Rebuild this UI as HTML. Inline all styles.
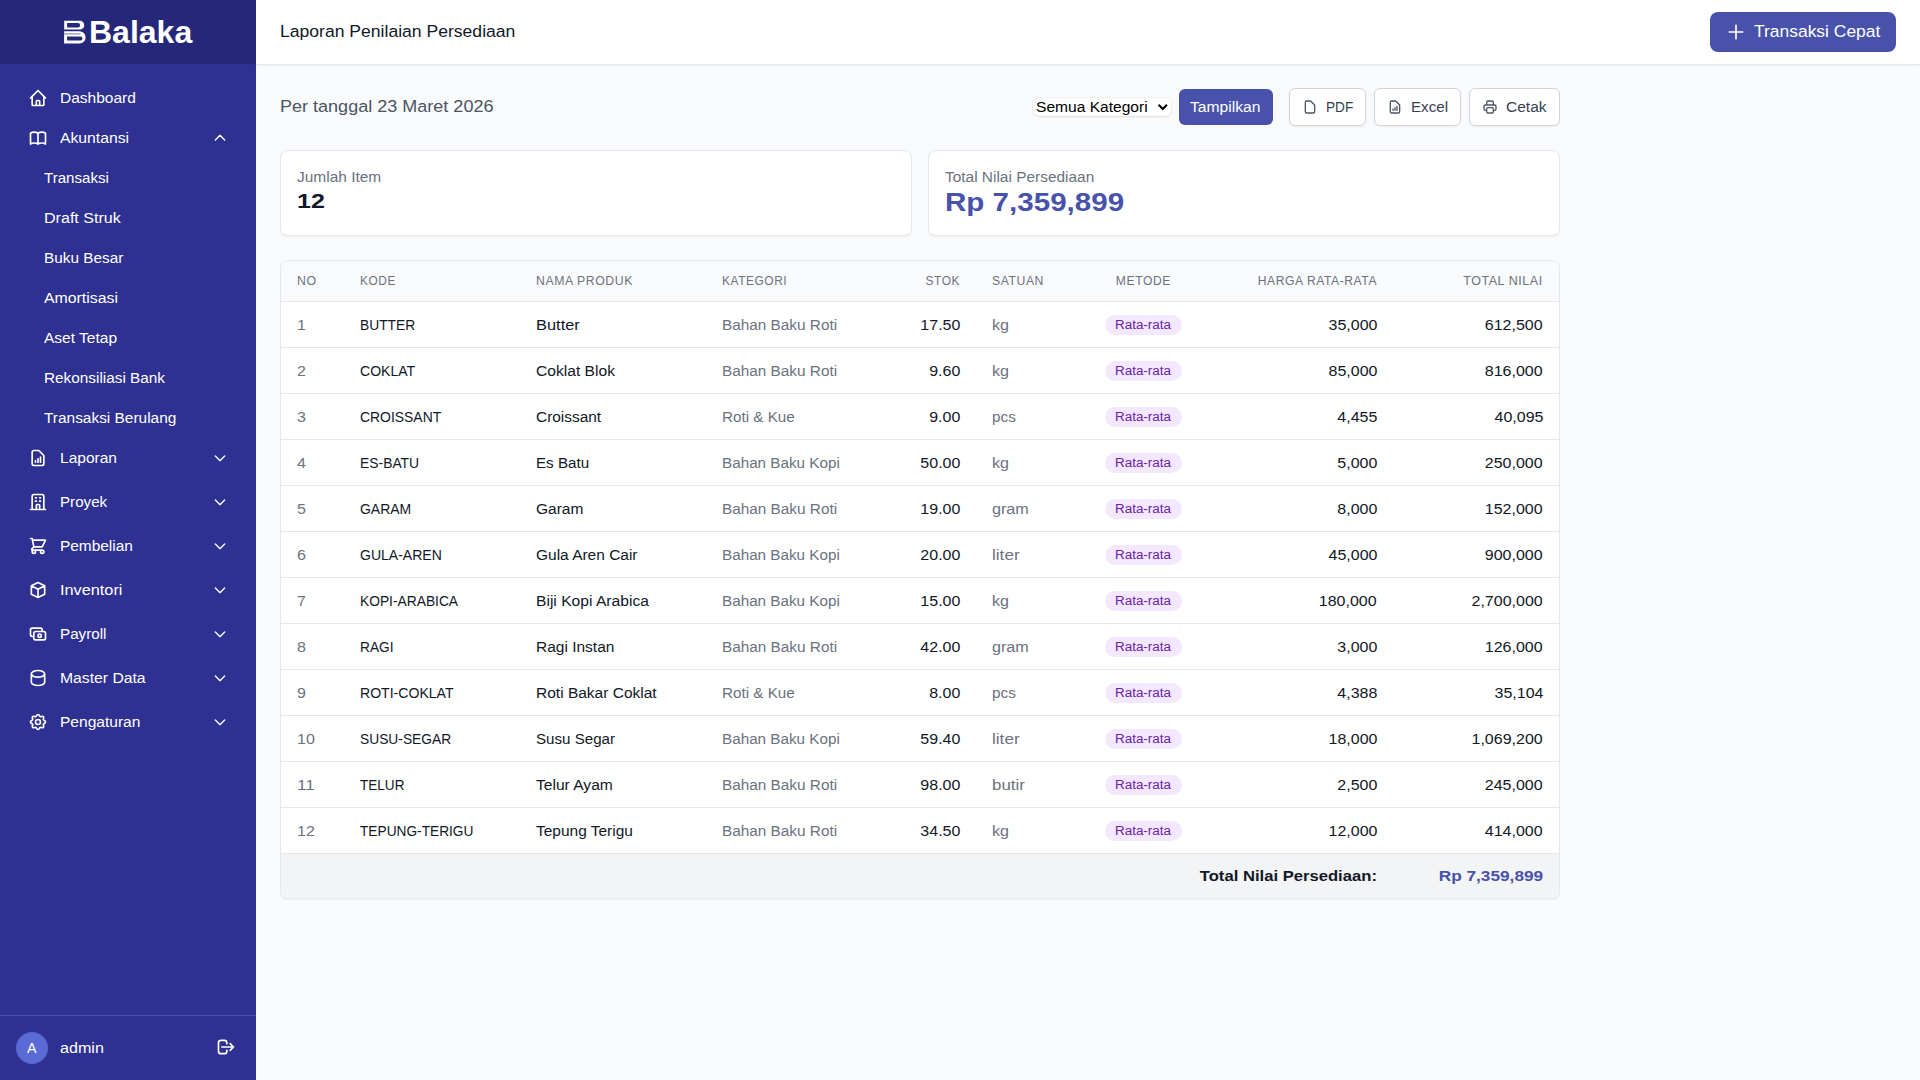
<!DOCTYPE html><html lang="id"><head><meta charset="utf-8"><title>Laporan Penilaian Persediaan</title><style>
*{box-sizing:border-box;margin:0;padding:0}
html,body{width:1920px;height:1080px;overflow:hidden}
body{font-family:"Liberation Sans",sans-serif;background:#F9FAFB;color:#111827;position:relative}
.abs{position:absolute}
.sb{position:absolute;left:0;top:0;width:256px;height:1080px;background:#2E3192;color:#fff}
.logo{position:absolute;left:0;top:0;width:256px;height:64px;background:#25287A}
.nav{position:absolute;left:28px;height:20px;line-height:20px;white-space:nowrap;display:flex;align-items:center}
.nav svg{flex:none}
.nav .lbl{position:absolute;left:32px;top:0;line-height:20px}
.sub{position:absolute;left:44px;height:20px;line-height:20px;white-space:nowrap}
.chev{position:absolute;left:212px}
.hdr{position:absolute;left:256px;top:0;width:1664px;height:65px;background:#fff;border-bottom:1px solid #E5E7EB;box-shadow:0 1px 2px rgba(0,0,0,.05)}
.btn{position:absolute;height:38px;top:88px;background:#fff;border:1px solid #D1D5DB;border-radius:6px;box-shadow:0 1px 2px rgba(0,0,0,.05);color:#374151;line-height:20px}
.card{position:absolute;top:150px;height:86px;width:632px;background:#fff;border:1px solid #E5E7EB;border-radius:8px;box-shadow:0 1px 2px rgba(0,0,0,.05)}
.tbl{position:absolute;left:280px;top:260px;width:1280px;height:639px;background:#fff;border:1px solid #E5E7EB;border-radius:8px;box-shadow:0 1px 2px rgba(0,0,0,.05);overflow:hidden}
table{border-collapse:collapse;table-layout:fixed;width:1278px}
th{height:40px;background:#F9FAFB;color:#6B7280;font-weight:400;text-align:left;padding:0 16px;border-bottom:1px solid #E5E7EB;white-space:nowrap;line-height:16px}
td{height:46px;padding:1px 16px 0 16px;border-bottom:1px solid #E5E7EB;white-space:nowrap;line-height:20px}
.r{text-align:right}
.c{text-align:center}
.g{color:#6B7280}
.badge{display:inline-block;width:77px;text-align:center;height:20px;line-height:20px;border-radius:9999px;background:#F3E8FF;color:#6B21A8}
tr.foot td{background:#F3F4F6;border-bottom:none;height:45px}
</style></head><body><div class="sb">
<div class="logo">
<svg class="abs" style="left:56px;top:12px" width="40" height="40" viewBox="56 12 40 40"><path fill="#fff" fill-rule="evenodd" d="M64.2 20.7H79.8A4.45 4.45 0 0 1 79.8 29.6H64.2ZM67.1 23.1H77.85A2.25 2.25 0 0 1 77.85 27.6H67.1ZM64.1 31.3H79.5A6.1 6.1 0 0 1 79.5 43.5H64.1ZM67.1 36.4H80.4A2.05 2.05 0 0 1 80.4 40.5H67.1Z"/><path d="M64.1 33.9H80.3" stroke="#25287A" stroke-width="0.9" stroke-opacity="0.7"/></svg>
<div class="abs" style="left:89px;top:12px;height:40px;line-height:40px;font-size:32px;font-weight:700;color:#fff;letter-spacing:0">Balaka</div>
</div>
<div class="nav" style="top:88px"><svg width="20" height="20" viewBox="0 0 24 24" fill="none" stroke="currentColor" stroke-width="2" stroke-linecap="round" stroke-linejoin="round" ><path d="M3 12l2-2m0 0l7-7 7 7M5 10v10a1 1 0 001 1h3m10-11l2 2m-2-2v10a1 1 0 01-1 1h-3m-6 0a1 1 0 001-1v-4a1 1 0 011-1h2a1 1 0 011 1v4a1 1 0 001 1m-6 0h6"/></svg><span class="lbl"><span style="display:inline-block;font-size:14.56px;transform:scaleX(1.0664);transform-origin:left">Dashboard</span></span></div>
<div class="nav" style="top:128px"><svg width="20" height="20" viewBox="0 0 24 24" fill="none" stroke="currentColor" stroke-width="2" stroke-linecap="round" stroke-linejoin="round" ><path d="M12 6.253v13m0-13C10.832 5.477 9.246 5 7.5 5S4.168 5.477 3 6.253v13C4.168 18.477 5.754 18 7.5 18s3.332.477 4.5 1.253m0-13C13.168 5.477 14.754 5 16.5 5c1.747 0 3.332.477 4.5 1.253v13C19.832 18.477 18.247 18 16.5 18c-1.746 0-3.332.477-4.5 1.253"/></svg><span class="lbl"><span style="display:inline-block;font-size:14.56px;transform:scaleX(1.0812);transform-origin:left">Akuntansi</span></span></div>
<div class="chev" style="top:130px"><svg width="16" height="16" viewBox="0 0 24 24" fill="none" stroke="currentColor" stroke-width="2" stroke-linecap="round" stroke-linejoin="round" ><path d="M5 15l7-7 7 7"/></svg></div>
<div class="sub" style="top:168px"><span style="display:inline-block;font-size:14.56px;transform:scaleX(1.0368);transform-origin:left">Transaksi</span></div>
<div class="sub" style="top:208px"><span style="display:inline-block;font-size:14.56px;transform:scaleX(1.1045);transform-origin:left">Draft Struk</span></div>
<div class="sub" style="top:248px"><span style="display:inline-block;font-size:14.56px;transform:scaleX(1.0540);transform-origin:left">Buku Besar</span></div>
<div class="sub" style="top:288px"><span style="display:inline-block;font-size:14.56px;transform:scaleX(1.0885);transform-origin:left">Amortisasi</span></div>
<div class="sub" style="top:328px"><span style="display:inline-block;font-size:14.56px;transform:scaleX(1.0676);transform-origin:left">Aset Tetap</span></div>
<div class="sub" style="top:368px"><span style="display:inline-block;font-size:14.56px;transform:scaleX(1.0539);transform-origin:left">Rekonsiliasi Bank</span></div>
<div class="sub" style="top:408px"><span style="display:inline-block;font-size:14.56px;transform:scaleX(1.0601);transform-origin:left">Transaksi Berulang</span></div>
<div class="nav" style="top:448px"><svg width="20" height="20" viewBox="0 0 24 24" fill="none" stroke="currentColor" stroke-width="2" stroke-linecap="round" stroke-linejoin="round" ><path d="M9 17v-2m3 2v-4m3 4v-6m2 10H7a2 2 0 01-2-2V5a2 2 0 012-2h5.586a1 1 0 01.707.293l5.414 5.414a1 1 0 01.293.707V19a2 2 0 01-2 2z"/></svg><span class="lbl"><span style="display:inline-block;font-size:14.56px;transform:scaleX(1.0676);transform-origin:left">Laporan</span></span></div>
<div class="chev" style="top:450px"><svg width="16" height="16" viewBox="0 0 24 24" fill="none" stroke="currentColor" stroke-width="2" stroke-linecap="round" stroke-linejoin="round" ><path d="M19 9l-7 7-7-7"/></svg></div>
<div class="nav" style="top:492px"><svg width="20" height="20" viewBox="0 0 24 24" fill="none" stroke="currentColor" stroke-width="2" stroke-linecap="round" stroke-linejoin="round" ><path d="M19 21V5a2 2 0 00-2-2H7a2 2 0 00-2 2v16m14 0h2m-2 0h-5m-9 0H3m2 0h5M9 7h1m-1 4h1m4-4h1m-1 4h1m-5 10v-5a1 1 0 011-1h2a1 1 0 011 1v5m-4 0h4"/></svg><span class="lbl"><span style="display:inline-block;font-size:14.56px;transform:scaleX(1.0420);transform-origin:left">Proyek</span></span></div>
<div class="chev" style="top:494px"><svg width="16" height="16" viewBox="0 0 24 24" fill="none" stroke="currentColor" stroke-width="2" stroke-linecap="round" stroke-linejoin="round" ><path d="M19 9l-7 7-7-7"/></svg></div>
<div class="nav" style="top:536px"><svg width="20" height="20" viewBox="0 0 24 24" fill="none" stroke="currentColor" stroke-width="2" stroke-linecap="round" stroke-linejoin="round" ><path d="M3 3h2l.4 2M7 13h10l4-8H5.4M7 13L5.4 5M7 13l-2.293 2.293c-.63.63-.184 1.707.707 1.707H17m0 0a2 2 0 100 4 2 2 0 000-4zm-8 2a2 2 0 11-4 0 2 2 0 014 0z"/></svg><span class="lbl"><span style="display:inline-block;font-size:14.56px;transform:scaleX(1.0601);transform-origin:left">Pembelian</span></span></div>
<div class="chev" style="top:538px"><svg width="16" height="16" viewBox="0 0 24 24" fill="none" stroke="currentColor" stroke-width="2" stroke-linecap="round" stroke-linejoin="round" ><path d="M19 9l-7 7-7-7"/></svg></div>
<div class="nav" style="top:580px"><svg width="20" height="20" viewBox="0 0 24 24" fill="none" stroke="currentColor" stroke-width="2" stroke-linecap="round" stroke-linejoin="round" ><path d="M20 7l-8-4-8 4m16 0l-8 4m8-4v10l-8 4m0-10L4 7m8 4v10M4 7v10l8 4"/></svg><span class="lbl"><span style="display:inline-block;font-size:14.56px;transform:scaleX(1.1188);transform-origin:left">Inventori</span></span></div>
<div class="chev" style="top:582px"><svg width="16" height="16" viewBox="0 0 24 24" fill="none" stroke="currentColor" stroke-width="2" stroke-linecap="round" stroke-linejoin="round" ><path d="M19 9l-7 7-7-7"/></svg></div>
<div class="nav" style="top:624px"><svg width="20" height="20" viewBox="0 0 24 24" fill="none" stroke="currentColor" stroke-width="2" stroke-linecap="round" stroke-linejoin="round" ><path d="M17 9V7a2 2 0 00-2-2H5a2 2 0 00-2 2v6a2 2 0 002 2h2m2 4h10a2 2 0 002-2v-6a2 2 0 00-2-2H9a2 2 0 00-2 2v6a2 2 0 002 2zm7-5a2 2 0 11-4 0 2 2 0 014 0z"/></svg><span class="lbl"><span style="display:inline-block;font-size:14.56px;transform:scaleX(1.0443);transform-origin:left">Payroll</span></span></div>
<div class="chev" style="top:626px"><svg width="16" height="16" viewBox="0 0 24 24" fill="none" stroke="currentColor" stroke-width="2" stroke-linecap="round" stroke-linejoin="round" ><path d="M19 9l-7 7-7-7"/></svg></div>
<div class="nav" style="top:668px"><svg width="20" height="20" viewBox="0 0 24 24" fill="none" stroke="currentColor" stroke-width="2" stroke-linecap="round" stroke-linejoin="round" ><path d="M4 7v10c0 2.21 3.582 4 8 4s8-1.79 8-4V7M4 7c0 2.21 3.582 4 8 4s8-1.79 8-4M4 7c0-2.21 3.582-4 8-4s8 1.79 8 4"/></svg><span class="lbl"><span style="display:inline-block;font-size:14.56px;transform:scaleX(1.0806);transform-origin:left">Master Data</span></span></div>
<div class="chev" style="top:670px"><svg width="16" height="16" viewBox="0 0 24 24" fill="none" stroke="currentColor" stroke-width="2" stroke-linecap="round" stroke-linejoin="round" ><path d="M19 9l-7 7-7-7"/></svg></div>
<div class="nav" style="top:712px"><svg width="20" height="20" viewBox="0 0 24 24" fill="none" stroke="currentColor" stroke-width="2" stroke-linecap="round" stroke-linejoin="round" ><path d="M10.325 4.317c.426-1.756 2.924-1.756 3.35 0a1.724 1.724 0 002.573 1.066c1.543-.94 3.31.826 2.37 2.37a1.724 1.724 0 001.065 2.572c1.756.426 1.756 2.924 0 3.35a1.724 1.724 0 00-1.066 2.573c.94 1.543-.826 3.31-2.37 2.37a1.724 1.724 0 00-2.572 1.065c-.426 1.756-2.924 1.756-3.35 0a1.724 1.724 0 00-2.573-1.066c-1.543.94-3.31-.826-2.37-2.37a1.724 1.724 0 00-1.065-2.572c-1.756-.426-1.756-2.924 0-3.35a1.724 1.724 0 001.066-2.573c-.94-1.543.826-3.31 2.37-2.37.996.608 2.296.07 2.572-1.065zM15 12a3 3 0 11-6 0 3 3 0 016 0z"/></svg><span class="lbl"><span style="display:inline-block;font-size:14.56px;transform:scaleX(1.0689);transform-origin:left">Pengaturan</span></span></div>
<div class="chev" style="top:714px"><svg width="16" height="16" viewBox="0 0 24 24" fill="none" stroke="currentColor" stroke-width="2" stroke-linecap="round" stroke-linejoin="round" ><path d="M19 9l-7 7-7-7"/></svg></div>
<div class="abs" style="left:0;top:1015px;width:256px;height:1px;background:#4A52B0"></div>
<div class="abs" style="left:16px;top:1032px;width:32px;height:32px;border-radius:50%;background:#5A6AD6;text-align:center;line-height:32px;color:#fff"><span style="display:inline-block;font-size:14.56px;transform:scaleX(0.9862);transform-origin:center">A</span></div>
<div class="abs" style="left:60px;top:1038px;line-height:20px"><span style="display:inline-block;font-size:14.56px;transform:scaleX(1.1063);transform-origin:left">admin</span></div>
<div class="abs" style="left:216px;top:1037px"><svg width="20" height="20" viewBox="0 0 24 24" fill="none" stroke="currentColor" stroke-width="2" stroke-linecap="round" stroke-linejoin="round" ><path d="M17 16l4-4m0 0l-4-4m4 4H7m6 4v1a3 3 0 01-3 3H6a3 3 0 01-3-3V7a3 3 0 013-3h4a3 3 0 013 3v1"/></svg></div>
</div>
<div class="hdr">
<div class="abs" style="left:24px;top:20px;line-height:24px"><span style="display:inline-block;font-size:16.64px;transform:scaleX(1.0565);transform-origin:left">Laporan Penilaian Persediaan</span></div>
<div class="abs" style="left:1454px;top:12px;width:186px;height:40px;border-radius:8px;background:#4852AB;color:#fff"><div class="abs" style="left:16px;top:10px"><svg width="20" height="20" viewBox="0 0 24 24" fill="none" stroke="currentColor" stroke-width="2" stroke-linecap="round" stroke-linejoin="round" ><path d="M12 4v16m8-8H4"/></svg></div><div class="abs" style="left:44px;top:8px;line-height:24px"><span style="display:inline-block;font-size:16.64px;transform:scaleX(1.0492);transform-origin:left">Transaksi Cepat</span></div></div>
</div>
<div class="abs" style="left:280px;top:95px;line-height:24px;color:#4B5563"><span style="display:inline-block;font-size:16.64px;transform:scaleX(1.0844);transform-origin:left">Per tanggal 23 Maret 2026</span></div>
<div class="abs" style="left:1033px;top:98px;width:138px;height:18px;border-radius:6px;background:#fff;box-shadow:0 0 0 1px rgba(0,0,0,.03),0 1px 2px rgba(0,0,0,.08)"><div class="abs" style="left:3px;top:-1px;line-height:20px;color:#000"><span style="display:inline-block;font-size:14.56px;transform:scaleX(1.0704);transform-origin:left">Semua Kategori</span></div><svg class="abs" style="left:124px;top:5px" width="12" height="9" viewBox="0 0 12 9"><path d="M1.6 1.8l4.15 4.1L9.9 1.8" fill="none" stroke="#000" stroke-width="2.1"/></svg></div>
<div class="abs" style="left:1179px;top:89px;width:94px;height:36px;border-radius:6px;background:#4852AB;color:#fff"><div class="abs" style="left:11px;top:8px;line-height:20px"><span style="display:inline-block;font-size:14.56px;transform:scaleX(1.0746);transform-origin:left">Tampilkan</span></div></div>
<div class="btn" style="left:1289px;width:77px"><div class="abs" style="left:12px;top:10px"><svg width="16" height="16" viewBox="0 0 24 24" fill="none" stroke="#4B5563" stroke-width="2" stroke-linecap="round" stroke-linejoin="round" ><path d="M7 21h10a2 2 0 002-2V9.414a1 1 0 00-.293-.707l-5.414-5.414A1 1 0 0012.586 3H7a2 2 0 00-2 2v14a2 2 0 002 2z"/></svg></div><div class="abs" style="left:36px;top:8px"><span style="display:inline-block;font-size:14.56px;transform:scaleX(0.9367);transform-origin:left">PDF</span></div></div>
<div class="btn" style="left:1374px;width:87px"><div class="abs" style="left:12px;top:10px"><svg width="16" height="16" viewBox="0 0 24 24" fill="none" stroke="#4B5563" stroke-width="2" stroke-linecap="round" stroke-linejoin="round" ><path d="M9 17v-2m3 2v-4m3 4v-6m2 10H7a2 2 0 01-2-2V5a2 2 0 012-2h5.586a1 1 0 01.707.293l5.414 5.414a1 1 0 01.293.707V19a2 2 0 01-2 2z"/></svg></div><div class="abs" style="left:36px;top:8px"><span style="display:inline-block;font-size:14.56px;transform:scaleX(1.0417);transform-origin:left">Excel</span></div></div>
<div class="btn" style="left:1469px;width:91px"><div class="abs" style="left:12px;top:10px"><svg width="16" height="16" viewBox="0 0 24 24" fill="none" stroke="#4B5563" stroke-width="2" stroke-linecap="round" stroke-linejoin="round" ><path d="M17 17h2a2 2 0 002-2v-4a2 2 0 00-2-2H5a2 2 0 00-2 2v4a2 2 0 002 2h2m2 4h6a2 2 0 002-2v-4a2 2 0 00-2-2H9a2 2 0 00-2 2v4a2 2 0 002 2zm8-12V5a2 2 0 00-2-2H9a2 2 0 00-2 2v4h10z"/></svg></div><div class="abs" style="left:36px;top:8px"><span style="display:inline-block;font-size:14.56px;transform:scaleX(1.0666);transform-origin:left">Cetak</span></div></div>
<div class="card" style="left:280px"><div class="abs" style="left:16px;top:16px;line-height:20px;color:#6B7280"><span style="display:inline-block;font-size:14.56px;transform:scaleX(1.0631);transform-origin:left">Jumlah Item</span></div><div class="abs" style="left:16px;top:36px;line-height:28px;color:#111827"><span style="display:inline-block;font-size:20.80px;transform:scaleX(1.2030);transform-origin:left;font-weight:700">12</span></div></div>
<div class="card" style="left:928px"><div class="abs" style="left:16px;top:16px;line-height:20px;color:#6B7280"><span style="display:inline-block;font-size:14.56px;transform:scaleX(1.0606);transform-origin:left">Total Nilai Persediaan</span></div><div class="abs" style="left:16px;top:35px;line-height:32px;color:#4852AB"><span style="display:inline-block;font-size:24.96px;transform:scaleX(1.1845);transform-origin:left;font-weight:700">Rp 7,359,899</span></div></div>
<div class="tbl"><table><colgroup><col style="width:63px"><col style="width:176px"><col style="width:186px"><col style="width:174px"><col style="width:96px"><col style="width:104px"><col style="width:126px"><col style="width:187px"><col style="width:166px"></colgroup>
<tr><th class=""><span style="display:inline-block;font-size:12.48px;transform:scaleX(0.9851);transform-origin:left;letter-spacing:0.600px">NO</span></th><th class=""><span style="display:inline-block;font-size:12.48px;transform:scaleX(0.9500);transform-origin:left;letter-spacing:0.600px">KODE</span></th><th class=""><span style="display:inline-block;font-size:12.48px;transform:scaleX(0.9823);transform-origin:left;letter-spacing:0.600px">NAMA PRODUK</span></th><th class=""><span style="display:inline-block;font-size:12.48px;transform:scaleX(0.9548);transform-origin:left;letter-spacing:0.600px">KATEGORI</span></th><th class="r"><span style="display:inline-block;font-size:12.48px;transform:scaleX(0.9588);transform-origin:right;letter-spacing:0.600px">STOK</span></th><th class=""><span style="display:inline-block;font-size:12.48px;transform:scaleX(0.9760);transform-origin:left;letter-spacing:0.600px">SATUAN</span></th><th class="c"><span style="display:inline-block;font-size:12.48px;transform:scaleX(0.9713);transform-origin:center;letter-spacing:0.600px">METODE</span></th><th class="r"><span style="display:inline-block;font-size:12.48px;transform:scaleX(0.9697);transform-origin:right;letter-spacing:0.600px">HARGA RATA-RATA</span></th><th class="r"><span style="display:inline-block;font-size:12.48px;transform:scaleX(0.9979);transform-origin:right;letter-spacing:0.600px">TOTAL NILAI</span></th></tr>
<tr><td class="g"><span style="display:inline-block;font-size:14.56px;transform:scaleX(1.1001);transform-origin:left">1</span></td><td><span style="display:inline-block;font-size:14.56px;transform:scaleX(0.9493);transform-origin:left">BUTTER</span></td><td><span style="display:inline-block;font-size:14.56px;transform:scaleX(1.1283);transform-origin:left">Butter</span></td><td class="g"><span style="display:inline-block;font-size:14.56px;transform:scaleX(1.0542);transform-origin:left">Bahan Baku Roti</span></td><td class="r"><span style="display:inline-block;font-size:14.56px;transform:scaleX(1.1001);transform-origin:right">17.50</span></td><td class="g"><span style="display:inline-block;font-size:14.56px;transform:scaleX(1.1052);transform-origin:left">kg</span></td><td class="c"><span class="badge"><span style="display:inline-block;font-size:12.48px;transform:scaleX(1.0797);transform-origin:center;position:relative;top:-1px">Rata-rata</span></span></td><td class="r"><span style="display:inline-block;font-size:14.56px;transform:scaleX(1.1001);transform-origin:right">35,000</span></td><td class="r"><span style="display:inline-block;font-size:14.56px;transform:scaleX(1.1001);transform-origin:right">612,500</span></td></tr>
<tr><td class="g"><span style="display:inline-block;font-size:14.56px;transform:scaleX(1.1001);transform-origin:left">2</span></td><td><span style="display:inline-block;font-size:14.56px;transform:scaleX(0.9645);transform-origin:left">COKLAT</span></td><td><span style="display:inline-block;font-size:14.56px;transform:scaleX(1.0732);transform-origin:left">Coklat Blok</span></td><td class="g"><span style="display:inline-block;font-size:14.56px;transform:scaleX(1.0542);transform-origin:left">Bahan Baku Roti</span></td><td class="r"><span style="display:inline-block;font-size:14.56px;transform:scaleX(1.1001);transform-origin:right">9.60</span></td><td class="g"><span style="display:inline-block;font-size:14.56px;transform:scaleX(1.1052);transform-origin:left">kg</span></td><td class="c"><span class="badge"><span style="display:inline-block;font-size:12.48px;transform:scaleX(1.0797);transform-origin:center;position:relative;top:-1px">Rata-rata</span></span></td><td class="r"><span style="display:inline-block;font-size:14.56px;transform:scaleX(1.1001);transform-origin:right">85,000</span></td><td class="r"><span style="display:inline-block;font-size:14.56px;transform:scaleX(1.1001);transform-origin:right">816,000</span></td></tr>
<tr><td class="g"><span style="display:inline-block;font-size:14.56px;transform:scaleX(1.1001);transform-origin:left">3</span></td><td><span style="display:inline-block;font-size:14.56px;transform:scaleX(0.9570);transform-origin:left">CROISSANT</span></td><td><span style="display:inline-block;font-size:14.56px;transform:scaleX(1.0604);transform-origin:left">Croissant</span></td><td class="g"><span style="display:inline-block;font-size:14.56px;transform:scaleX(1.0465);transform-origin:left">Roti &amp; Kue</span></td><td class="r"><span style="display:inline-block;font-size:14.56px;transform:scaleX(1.1001);transform-origin:right">9.00</span></td><td class="g"><span style="display:inline-block;font-size:14.56px;transform:scaleX(1.0539);transform-origin:left">pcs</span></td><td class="c"><span class="badge"><span style="display:inline-block;font-size:12.48px;transform:scaleX(1.0797);transform-origin:center;position:relative;top:-1px">Rata-rata</span></span></td><td class="r"><span style="display:inline-block;font-size:14.56px;transform:scaleX(1.1001);transform-origin:right">4,455</span></td><td class="r"><span style="display:inline-block;font-size:14.56px;transform:scaleX(1.1001);transform-origin:right">40,095</span></td></tr>
<tr><td class="g"><span style="display:inline-block;font-size:14.56px;transform:scaleX(1.1001);transform-origin:left">4</span></td><td><span style="display:inline-block;font-size:14.56px;transform:scaleX(0.9542);transform-origin:left">ES-BATU</span></td><td><span style="display:inline-block;font-size:14.56px;transform:scaleX(1.0422);transform-origin:left">Es Batu</span></td><td class="g"><span style="display:inline-block;font-size:14.56px;transform:scaleX(1.0485);transform-origin:left">Bahan Baku Kopi</span></td><td class="r"><span style="display:inline-block;font-size:14.56px;transform:scaleX(1.1001);transform-origin:right">50.00</span></td><td class="g"><span style="display:inline-block;font-size:14.56px;transform:scaleX(1.1052);transform-origin:left">kg</span></td><td class="c"><span class="badge"><span style="display:inline-block;font-size:12.48px;transform:scaleX(1.0797);transform-origin:center;position:relative;top:-1px">Rata-rata</span></span></td><td class="r"><span style="display:inline-block;font-size:14.56px;transform:scaleX(1.1001);transform-origin:right">5,000</span></td><td class="r"><span style="display:inline-block;font-size:14.56px;transform:scaleX(1.1001);transform-origin:right">250,000</span></td></tr>
<tr><td class="g"><span style="display:inline-block;font-size:14.56px;transform:scaleX(1.1001);transform-origin:left">5</span></td><td><span style="display:inline-block;font-size:14.56px;transform:scaleX(0.9598);transform-origin:left">GARAM</span></td><td><span style="display:inline-block;font-size:14.56px;transform:scaleX(1.0653);transform-origin:left">Garam</span></td><td class="g"><span style="display:inline-block;font-size:14.56px;transform:scaleX(1.0542);transform-origin:left">Bahan Baku Roti</span></td><td class="r"><span style="display:inline-block;font-size:14.56px;transform:scaleX(1.1001);transform-origin:right">19.00</span></td><td class="g"><span style="display:inline-block;font-size:14.56px;transform:scaleX(1.1112);transform-origin:left">gram</span></td><td class="c"><span class="badge"><span style="display:inline-block;font-size:12.48px;transform:scaleX(1.0797);transform-origin:center;position:relative;top:-1px">Rata-rata</span></span></td><td class="r"><span style="display:inline-block;font-size:14.56px;transform:scaleX(1.1001);transform-origin:right">8,000</span></td><td class="r"><span style="display:inline-block;font-size:14.56px;transform:scaleX(1.1001);transform-origin:right">152,000</span></td></tr>
<tr><td class="g"><span style="display:inline-block;font-size:14.56px;transform:scaleX(1.1001);transform-origin:left">6</span></td><td><span style="display:inline-block;font-size:14.56px;transform:scaleX(0.9636);transform-origin:left">GULA-AREN</span></td><td><span style="display:inline-block;font-size:14.56px;transform:scaleX(1.0641);transform-origin:left">Gula Aren Cair</span></td><td class="g"><span style="display:inline-block;font-size:14.56px;transform:scaleX(1.0485);transform-origin:left">Bahan Baku Kopi</span></td><td class="r"><span style="display:inline-block;font-size:14.56px;transform:scaleX(1.1001);transform-origin:right">20.00</span></td><td class="g"><span style="display:inline-block;font-size:14.56px;transform:scaleX(1.1781);transform-origin:left">liter</span></td><td class="c"><span class="badge"><span style="display:inline-block;font-size:12.48px;transform:scaleX(1.0797);transform-origin:center;position:relative;top:-1px">Rata-rata</span></span></td><td class="r"><span style="display:inline-block;font-size:14.56px;transform:scaleX(1.1001);transform-origin:right">45,000</span></td><td class="r"><span style="display:inline-block;font-size:14.56px;transform:scaleX(1.1001);transform-origin:right">900,000</span></td></tr>
<tr><td class="g"><span style="display:inline-block;font-size:14.56px;transform:scaleX(1.1001);transform-origin:left">7</span></td><td><span style="display:inline-block;font-size:14.56px;transform:scaleX(0.9478);transform-origin:left">KOPI-ARABICA</span></td><td><span style="display:inline-block;font-size:14.56px;transform:scaleX(1.0738);transform-origin:left">Biji Kopi Arabica</span></td><td class="g"><span style="display:inline-block;font-size:14.56px;transform:scaleX(1.0485);transform-origin:left">Bahan Baku Kopi</span></td><td class="r"><span style="display:inline-block;font-size:14.56px;transform:scaleX(1.1001);transform-origin:right">15.00</span></td><td class="g"><span style="display:inline-block;font-size:14.56px;transform:scaleX(1.1052);transform-origin:left">kg</span></td><td class="c"><span class="badge"><span style="display:inline-block;font-size:12.48px;transform:scaleX(1.0797);transform-origin:center;position:relative;top:-1px">Rata-rata</span></span></td><td class="r"><span style="display:inline-block;font-size:14.56px;transform:scaleX(1.1001);transform-origin:right">180,000</span></td><td class="r"><span style="display:inline-block;font-size:14.56px;transform:scaleX(1.1001);transform-origin:right">2,700,000</span></td></tr>
<tr><td class="g"><span style="display:inline-block;font-size:14.56px;transform:scaleX(1.1001);transform-origin:left">8</span></td><td><span style="display:inline-block;font-size:14.56px;transform:scaleX(0.9403);transform-origin:left">RAGI</span></td><td><span style="display:inline-block;font-size:14.56px;transform:scaleX(1.0654);transform-origin:left">Ragi Instan</span></td><td class="g"><span style="display:inline-block;font-size:14.56px;transform:scaleX(1.0542);transform-origin:left">Bahan Baku Roti</span></td><td class="r"><span style="display:inline-block;font-size:14.56px;transform:scaleX(1.1001);transform-origin:right">42.00</span></td><td class="g"><span style="display:inline-block;font-size:14.56px;transform:scaleX(1.1112);transform-origin:left">gram</span></td><td class="c"><span class="badge"><span style="display:inline-block;font-size:12.48px;transform:scaleX(1.0797);transform-origin:center;position:relative;top:-1px">Rata-rata</span></span></td><td class="r"><span style="display:inline-block;font-size:14.56px;transform:scaleX(1.1001);transform-origin:right">3,000</span></td><td class="r"><span style="display:inline-block;font-size:14.56px;transform:scaleX(1.1001);transform-origin:right">126,000</span></td></tr>
<tr><td class="g"><span style="display:inline-block;font-size:14.56px;transform:scaleX(1.1001);transform-origin:left">9</span></td><td><span style="display:inline-block;font-size:14.56px;transform:scaleX(0.9672);transform-origin:left">ROTI-COKLAT</span></td><td><span style="display:inline-block;font-size:14.56px;transform:scaleX(1.0658);transform-origin:left">Roti Bakar Coklat</span></td><td class="g"><span style="display:inline-block;font-size:14.56px;transform:scaleX(1.0465);transform-origin:left">Roti &amp; Kue</span></td><td class="r"><span style="display:inline-block;font-size:14.56px;transform:scaleX(1.1001);transform-origin:right">8.00</span></td><td class="g"><span style="display:inline-block;font-size:14.56px;transform:scaleX(1.0539);transform-origin:left">pcs</span></td><td class="c"><span class="badge"><span style="display:inline-block;font-size:12.48px;transform:scaleX(1.0797);transform-origin:center;position:relative;top:-1px">Rata-rata</span></span></td><td class="r"><span style="display:inline-block;font-size:14.56px;transform:scaleX(1.1001);transform-origin:right">4,388</span></td><td class="r"><span style="display:inline-block;font-size:14.56px;transform:scaleX(1.1001);transform-origin:right">35,104</span></td></tr>
<tr><td class="g"><span style="display:inline-block;font-size:14.56px;transform:scaleX(1.1001);transform-origin:left">10</span></td><td><span style="display:inline-block;font-size:14.56px;transform:scaleX(0.9474);transform-origin:left">SUSU-SEGAR</span></td><td><span style="display:inline-block;font-size:14.56px;transform:scaleX(1.0397);transform-origin:left">Susu Segar</span></td><td class="g"><span style="display:inline-block;font-size:14.56px;transform:scaleX(1.0485);transform-origin:left">Bahan Baku Kopi</span></td><td class="r"><span style="display:inline-block;font-size:14.56px;transform:scaleX(1.1001);transform-origin:right">59.40</span></td><td class="g"><span style="display:inline-block;font-size:14.56px;transform:scaleX(1.1781);transform-origin:left">liter</span></td><td class="c"><span class="badge"><span style="display:inline-block;font-size:12.48px;transform:scaleX(1.0797);transform-origin:center;position:relative;top:-1px">Rata-rata</span></span></td><td class="r"><span style="display:inline-block;font-size:14.56px;transform:scaleX(1.1001);transform-origin:right">18,000</span></td><td class="r"><span style="display:inline-block;font-size:14.56px;transform:scaleX(1.1001);transform-origin:right">1,069,200</span></td></tr>
<tr><td class="g"><span style="display:inline-block;font-size:14.56px;transform:scaleX(1.1787);transform-origin:left">11</span></td><td><span style="display:inline-block;font-size:14.56px;transform:scaleX(0.9318);transform-origin:left">TELUR</span></td><td><span style="display:inline-block;font-size:14.56px;transform:scaleX(1.0715);transform-origin:left">Telur Ayam</span></td><td class="g"><span style="display:inline-block;font-size:14.56px;transform:scaleX(1.0542);transform-origin:left">Bahan Baku Roti</span></td><td class="r"><span style="display:inline-block;font-size:14.56px;transform:scaleX(1.1001);transform-origin:right">98.00</span></td><td class="g"><span style="display:inline-block;font-size:14.56px;transform:scaleX(1.1615);transform-origin:left">butir</span></td><td class="c"><span class="badge"><span style="display:inline-block;font-size:12.48px;transform:scaleX(1.0797);transform-origin:center;position:relative;top:-1px">Rata-rata</span></span></td><td class="r"><span style="display:inline-block;font-size:14.56px;transform:scaleX(1.1001);transform-origin:right">2,500</span></td><td class="r"><span style="display:inline-block;font-size:14.56px;transform:scaleX(1.1001);transform-origin:right">245,000</span></td></tr>
<tr><td class="g"><span style="display:inline-block;font-size:14.56px;transform:scaleX(1.1001);transform-origin:left">12</span></td><td><span style="display:inline-block;font-size:14.56px;transform:scaleX(0.9419);transform-origin:left">TEPUNG-TERIGU</span></td><td><span style="display:inline-block;font-size:14.56px;transform:scaleX(1.0630);transform-origin:left">Tepung Terigu</span></td><td class="g"><span style="display:inline-block;font-size:14.56px;transform:scaleX(1.0542);transform-origin:left">Bahan Baku Roti</span></td><td class="r"><span style="display:inline-block;font-size:14.56px;transform:scaleX(1.1001);transform-origin:right">34.50</span></td><td class="g"><span style="display:inline-block;font-size:14.56px;transform:scaleX(1.1052);transform-origin:left">kg</span></td><td class="c"><span class="badge"><span style="display:inline-block;font-size:12.48px;transform:scaleX(1.0797);transform-origin:center;position:relative;top:-1px">Rata-rata</span></span></td><td class="r"><span style="display:inline-block;font-size:14.56px;transform:scaleX(1.1001);transform-origin:right">12,000</span></td><td class="r"><span style="display:inline-block;font-size:14.56px;transform:scaleX(1.1001);transform-origin:right">414,000</span></td></tr>
<tr class="foot"><td colspan="8" class="r"><span style="display:inline-block;font-size:14.56px;transform:scaleX(1.1435);transform-origin:right;font-weight:700">Total Nilai Persediaan:</span></td><td class="r" style="color:#4852AB"><span style="display:inline-block;font-size:14.56px;transform:scaleX(1.1846);transform-origin:right;font-weight:700">Rp 7,359,899</span></td></tr>
</table></div></body></html>
